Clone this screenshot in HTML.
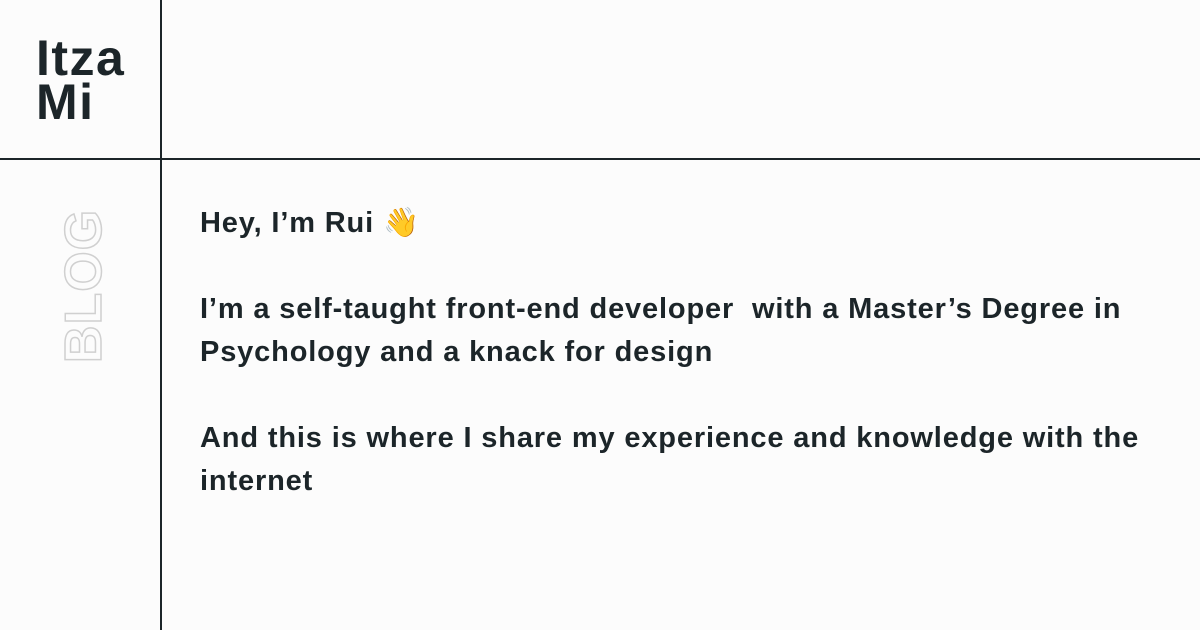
<!DOCTYPE html>
<html><head><meta charset="utf-8"><style>
html,body{margin:0;padding:0}
body{width:1200px;height:630px;background:#fcfcfc;position:relative;overflow:hidden;font-family:"Liberation Sans",sans-serif;color:#1c2529}
.v{position:absolute;left:160px;top:0;width:2px;height:630px;background:#1c2529}
.h{position:absolute;left:0;top:158px;width:1200px;height:2px;background:#1c2529}
.logo{position:absolute;left:36px;top:36px;font-weight:bold;font-size:50px;line-height:44px;letter-spacing:1.5px}
.blog{position:absolute;left:84px;top:286px;transform:translate(-50%,-50%) rotate(-90deg);font-size:52px;font-weight:bold;color:transparent;-webkit-text-stroke:1.5px #d0d0d0;letter-spacing:1px;white-space:nowrap}
.t{position:absolute;left:200px;font-weight:bold;font-size:29px;letter-spacing:0.85px;white-space:nowrap;line-height:43px}
</style></head><body>
<div class="v"></div><div class="h"></div>
<div class="logo">Itza<br>Mi</div>
<div class="blog">BLOG</div>
<div class="t" style="top:202px">Hey, I’m Rui 👋</div>
<div class="t" style="top:288px">I’m a self-taught front-end developer&nbsp; with a Master’s Degree in<br>Psychology and a knack for design</div>
<div class="t" style="top:417px">And this is where I share my experience and knowledge with the<br>internet</div>
</body></html>
